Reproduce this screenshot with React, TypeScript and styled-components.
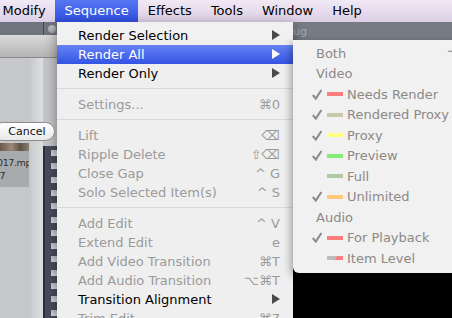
import React from 'react';
import styled, { createGlobalStyle } from 'styled-components';

const GlobalStyle = createGlobalStyle`
  html, body {
    margin: 0;
    padding: 0;
    background: #000;
    overflow: hidden;
  }
  body {
    font-family: "DejaVu Sans", "Liberation Sans", sans-serif;
  }
`;

const Screen = styled.div`
  position: relative;
  width: 452px;
  height: 318px;
  overflow: hidden;
  display: flex;
  flex-direction: column;
  font-family: "DejaVu Sans", "Liberation Sans", sans-serif;
`;

const MenuBar = styled.div`
  height: 22px;
  flex: none;
  display: flex;
  margin-left: -7px;
  background: linear-gradient(#f1e9f5, #dccfe6);
`;

const MenuTitle = styled.div<{ $active?: boolean }>`
  display: flex;
  align-items: center;
  padding: 0 9.5px 1px;
  font-size: 13px;
  color: ${p => (p.$active ? '#fff' : '#000')};
  background: ${p => (p.$active ? 'linear-gradient(#5676f2, #2f50e2)' : 'transparent')};
`;

const Workspace = styled.div`
  flex: 1;
  display: flex;
  min-height: 0;
`;

const BrowserPanel = styled.div`
  width: 57px;
  flex: none;
  display: flex;
  flex-direction: column;
`;

const PanelTabs = styled.div`
  height: 13px;
  flex: none;
  display: flex;
  background: #70747e;
`;

const TabDivider = styled.div`
  width: 43px;
  border-right: 1px solid #44474e;
`;

const Knob = styled.div`
  width: 8px;
  height: 8px;
  margin: 3px 0 0 4px;
  border-radius: 50%;
  background: radial-gradient(circle at 40% 35%, #c4c6cb, #8e9097);
`;

const TitleBar = styled.div`
  height: 22px;
  flex: none;
  background: linear-gradient(#dadada, #b3b3b3);
  border-bottom: 1px solid #8a8a8a;
`;

const BrowserBody = styled.div`
  flex: 1;
  display: flex;
  background: #c6c7ca;
`;

const ListCol = styled.div`
  width: 43px;
  flex: none;
  display: flex;
  flex-direction: column;
  padding-top: 64px;
  background: linear-gradient(90deg, #c6c7ca 29px, #d3d4d6 36px, #dedfe0 43px);
`;

const CancelButton = styled.div`
  width: 62px;
  height: 19px;
  margin-left: -7px;
  display: flex;
  align-items: center;
  justify-content: center;
  box-sizing: border-box;
  padding-left: 6px;
  border: 1px solid #8c8c8c;
  border-radius: 10px;
  background: linear-gradient(#ffffff, #e9e9e9);
  font-size: 11px;
  color: #111;
  position: relative;
  z-index: 1;
`;

const Thumb = styled.div`
  width: 29px;
  height: 44px;
  margin-top: 2px;
  background: #a9aaae;
  overflow: hidden;
`;

const ThumbImage = styled.div`
  height: 8px;
  background: linear-gradient(90deg, #6b5a4a, #9a8a78 40%, #5d5246 70%, #8a7d70);
`;

const ThumbLabel = styled.div`
  font-size: 9.5px;
  letter-spacing: -0.4px;
  line-height: 13px;
  color: #2e2e2e;
  margin: 5px 0 0 -3px;
  white-space: nowrap;
`;

const FilmStrip = styled.div`
  width: 14px;
  flex: none;
  margin-top: 88px;
  box-sizing: border-box;
  padding: 4px 0 0 6px;
  background: #4a4c5d;
  border-left: 2px solid #2c2e3a;
`;

const Sprockets = styled.div`
  height: 100%;
  background: repeating-linear-gradient(
    to bottom,
    #c3c4cc 0,
    #dcdde2 6px,
    transparent 6px,
    transparent 13.3px
  );
`;

const ViewerPanel = styled.div`
  flex: 1;
  display: flex;
  flex-direction: column;
`;

const ViewerTabs = styled.div`
  height: 18px;
  flex: none;
  display: flex;
  align-items: center;
  padding-left: 226px;
  background: #777b84;
  font-size: 11px;
  color: #a9acb2;
`;

const Canvas = styled.div`
  flex: 1;
  background: #000;
`;

const Menu = styled.div`
  position: absolute;
  top: 22px;
  left: 57px;
  width: 236px;
  padding: 4px 0;
  background: rgba(244, 244, 244, 0.98);
  box-shadow: 0 4px 12px rgba(0, 0, 0, 0.45);
`;

const MenuItem = styled.div<{ $disabled?: boolean; $active?: boolean }>`
  height: 19px;
  display: flex;
  align-items: center;
  padding: 0 13px 1px 21px;
  box-sizing: border-box;
  font-size: 13px;
  white-space: nowrap;
  color: ${p => (p.$active ? '#fff' : p.$disabled ? '#9a9a9a' : '#000')};
  background: ${p => (p.$active ? 'linear-gradient(#6683f4, #3354e4)' : 'transparent')};
`;

const ItemLabel = styled.span`
  flex: 1;
`;

const Shortcut = styled.span`
  color: #9a9a9a;
`;

const Separator = styled.div`
  height: 1px;
  margin: 5px 0 6px;
  background: #d8d8d8;
`;

const SubMenu = styled.div`
  position: absolute;
  top: 40px;
  left: 293px;
  width: 192px;
  padding: 3px 0 4px;
  background: #f1f1f1;
  border-radius: 0 0 6px 6px;
  box-shadow: -2px 3px 8px rgba(0, 0, 0, 0.35);
`;

const SubItem = styled.div<{ $header?: boolean }>`
  height: 20.5px;
  display: flex;
  align-items: center;
  padding-left: ${p => (p.$header ? '23px' : '19px')};
  font-size: 13px;
  color: #8c8986;
  white-space: nowrap;
`;

const CheckBox = styled.span`
  width: 10px;
  height: 11px;
  margin-right: 5px;
  display: flex;
`;

const Swatch = styled.span<{ $color: string }>`
  width: 16px;
  height: 4px;
  margin-right: 4px;
  background: ${p => p.$color};
`;

const SubShortcut = styled.span`
  margin-left: auto;
  padding-right: 14px;
`;

const Arrow = ({ light }: { light?: boolean }) => (
  <svg width="8" height="10" viewBox="0 0 8 10">
    <polygon points="0,0 8,5 0,10" fill={light ? '#fff' : '#4a4a4a'} />
  </svg>
);

const Check = () => (
  <svg width="10" height="11" viewBox="0 0 10 11">
    <path d="M0.8 6 L3.8 9.6 L9.4 1" fill="none" stroke="#8a8a8a" strokeWidth="2" />
  </svg>
);

type Entry =
  | { sep: true }
  | { label: string; key?: string; sub?: boolean; disabled?: boolean; active?: boolean };

const items: Entry[] = [
  { label: 'Render Selection', sub: true },
  { label: 'Render All', sub: true, active: true },
  { label: 'Render Only', sub: true },
  { sep: true },
  { label: 'Settings...', key: '⌘0', disabled: true },
  { sep: true },
  { label: 'Lift', key: '⌫', disabled: true },
  { label: 'Ripple Delete', key: '⇧⌫', disabled: true },
  { label: 'Close Gap', key: '^ G', disabled: true },
  { label: 'Solo Selected Item(s)', key: '^ S', disabled: true },
  { sep: true },
  { label: 'Add Edit', key: '^ V', disabled: true },
  { label: 'Extend Edit', key: 'e', disabled: true },
  { label: 'Add Video Transition', key: '⌘T', disabled: true },
  { label: 'Add Audio Transition', key: '⌥⌘T', disabled: true },
  { label: 'Transition Alignment', sub: true },
  { label: 'Trim Edit', key: '⌘7', disabled: true },
];

type SubEntry = { label: string; header?: boolean; checked?: boolean; color?: string; key?: string };

const renderItems: SubEntry[] = [
  { label: 'Both', header: true, key: '⌥R' },
  { label: 'Video', header: true },
  { label: 'Needs Render', checked: true, color: '#ff7c7c' },
  { label: 'Rendered Proxy', checked: true, color: '#c9c9aa' },
  { label: 'Proxy', checked: true, color: '#ffff82' },
  { label: 'Preview', checked: true, color: '#80ee72' },
  { label: 'Full', color: '#b1c8a6' },
  { label: 'Unlimited', checked: true, color: '#ffc97a' },
  { label: 'Audio', header: true },
  { label: 'For Playback', checked: true, color: '#ff7c7c' },
  { label: 'Item Level', color: 'linear-gradient(115deg, #bdbdbd 55%, #ff7c7c 55%)' },
];

const menuTitles = ['Modify', 'Sequence', 'Effects', 'Tools', 'Window', 'Help'];

export default function App() {
  return (
    <Screen>
      <GlobalStyle />
      <MenuBar>
        {menuTitles.map(t => (
          <MenuTitle key={t} $active={t === 'Sequence'}>
            {t}
          </MenuTitle>
        ))}
      </MenuBar>
      <Workspace>
        <BrowserPanel>
          <PanelTabs>
            <TabDivider />
            <Knob />
          </PanelTabs>
          <TitleBar />
          <BrowserBody>
            <ListCol>
              <CancelButton>Cancel</CancelButton>
              <Thumb>
                <ThumbImage />
                <ThumbLabel>
                  017.mp
                  <br />
                  &nbsp;7
                </ThumbLabel>
              </Thumb>
            </ListCol>
            <FilmStrip>
              <Sprockets />
            </FilmStrip>
          </BrowserBody>
        </BrowserPanel>
        <ViewerPanel>
          <ViewerTabs>Slug</ViewerTabs>
          <Canvas />
        </ViewerPanel>
      </Workspace>

      <Menu>
        {items.map((it, i) =>
          'sep' in it ? (
            <Separator key={i} />
          ) : (
            <MenuItem key={i} $disabled={it.disabled} $active={it.active}>
              <ItemLabel>{it.label}</ItemLabel>
              {it.key && <Shortcut>{it.key}</Shortcut>}
              {it.sub && <Arrow light={it.active} />}
            </MenuItem>
          )
        )}
      </Menu>

      <SubMenu>
        {renderItems.map(s => (
          <SubItem key={s.label} $header={s.header}>
            {!s.header && <CheckBox>{s.checked && <Check />}</CheckBox>}
            {s.color && <Swatch $color={s.color} />}
            {s.label}
            {s.key && <SubShortcut>{s.key}</SubShortcut>}
          </SubItem>
        ))}
      </SubMenu>
    </Screen>
  );
}
